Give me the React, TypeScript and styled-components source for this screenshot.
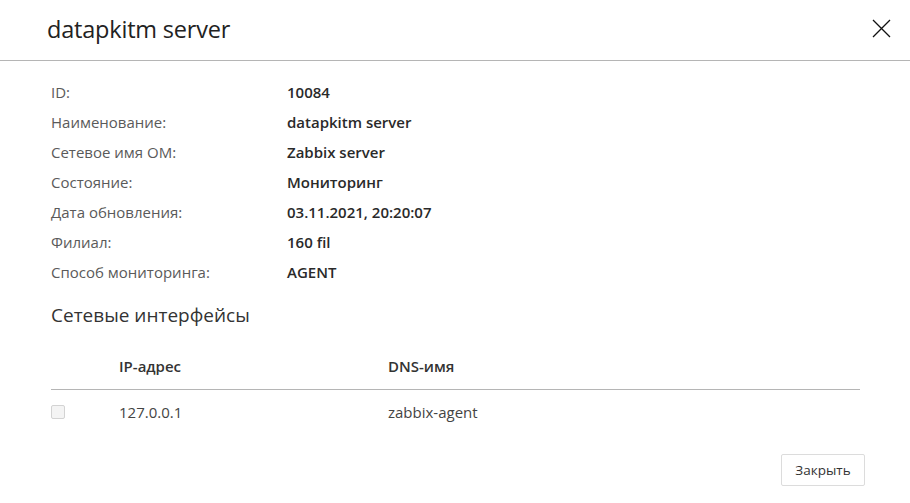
import React from "react";
import styled, { createGlobalStyle } from "styled-components";

const Global = createGlobalStyle`
  html, body { margin: 0; padding: 0; background: #fff; }
  body { font-family: "Open Sans", "Noto Sans", sans-serif; color: #333; }
`;

const Dialog = styled.div`
  width: 910px;
  height: 503px;
  background: #fff;
  display: flex;
  flex-direction: column;
`;

const Header = styled.header`
  height: 61px;
  border-bottom: 1px solid #b5b5b5;
  display: flex;
  align-items: center;
  justify-content: space-between;
  padding: 0 19px 0 47px;
  box-sizing: border-box;
`;

const Title = styled.h1`
  margin: 0;
  margin-top: -2px;
  font-size: 23.5px;
  font-weight: 400;
  color: #222;
  letter-spacing: -0.2px;
`;

const CloseButton = styled.button`
  width: 20px;
  height: 20px;
  padding: 0;
  border: 0;
  background: none;
  display: flex;
  align-items: center;
  justify-content: center;
  margin-top: -3px;
  cursor: pointer;
`;

const Body = styled.div`
  flex: 1;
  padding: 16px 50px 0 51px;
  display: flex;
  flex-direction: column;
`;

const InfoList = styled.dl`
  margin: 0;
  display: grid;
  grid-template-columns: 236px 1fr;
  grid-auto-rows: 30px;
  align-items: center;
  font-size: 15px;
`;

const Label = styled.dt`
  color: #5a5a5a;
  margin: 0;
`;

const Value = styled.dd`
  color: #2a2a2a;
  font-weight: 600;
  margin: 0;
`;

const SectionTitle = styled.h2`
  margin: 15px 0 0;
  font-size: 19px;
  font-weight: 500;
  color: #333;
  line-height: 26px;
`;

const Table = styled.table`
  margin-top: 21px;
  width: 809px;
  border-collapse: collapse;
  font-size: 15px;
`;

const HeadCell = styled.th`
  text-align: left;
  font-weight: 600;
  color: #333;
  height: 33px;
  padding: 0 0 7px;
  border-bottom: 1px solid #b5b5b5;
  vertical-align: middle;
`;

const Cell = styled.td`
  color: #444;
  height: 43px;
  padding: 0 0 2px;
  vertical-align: middle;
`;

const CheckCell = styled(Cell)`
  width: 68px;
`;

const IpCell = styled(Cell)`
  width: 269px;
`;

const Check = styled.span`
  display: block;
  width: 12px;
  height: 12px;
  border: 1px solid #d3d3d3;
  border-radius: 2px;
  background: #f4f4f4;
`;

const Footer = styled.footer`
  display: flex;
  justify-content: flex-end;
  padding: 0 45px 17px 0;
`;

const Button = styled.button`
  font-family: inherit;
  font-size: 13.5px;
  color: #333;
  background: #fff;
  border: 1px solid #dcdcdc;
  border-radius: 2px;
  width: 84px;
  height: 32px;
  padding: 0;
`;

const info: [string, string][] = [
  ["ID:", "10084"],
  ["Наименование:", "datapkitm server"],
  ["Сетевое имя ОМ:", "Zabbix server"],
  ["Состояние:", "Мониторинг"],
  ["Дата обновления:", "03.11.2021, 20:20:07"],
  ["Филиал:", "160 fil"],
  ["Способ мониторинга:", "AGENT"],
];

export default function App() {
  return (
    <>
      <Global />
      <Dialog>
        <Header>
          <Title>datapkitm server</Title>
          <CloseButton aria-label="close">
            <svg width="19" height="19" viewBox="0 0 19 19">
              <path d="M1 1 L18 18 M18 1 L1 18" stroke="#111" strokeWidth="1.3" fill="none" />
            </svg>
          </CloseButton>
        </Header>
        <Body>
          <InfoList>
            {info.map(([l, v]) => (
              <React.Fragment key={l}>
                <Label>{l}</Label>
                <Value>{v}</Value>
              </React.Fragment>
            ))}
          </InfoList>
          <SectionTitle>Сетевые интерфейсы</SectionTitle>
          <Table>
            <thead>
              <tr>
                <HeadCell />
                <HeadCell>IP-адрес</HeadCell>
                <HeadCell>DNS-имя</HeadCell>
              </tr>
            </thead>
            <tbody>
              <tr>
                <CheckCell><Check /></CheckCell>
                <IpCell>127.0.0.1</IpCell>
                <Cell>zabbix-agent</Cell>
              </tr>
            </tbody>
          </Table>
        </Body>
        <Footer>
          <Button>Закрыть</Button>
        </Footer>
      </Dialog>
    </>
  );
}
